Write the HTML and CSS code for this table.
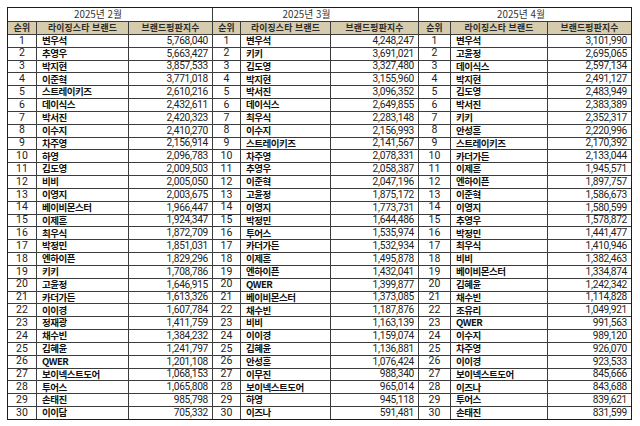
FILE: index.html
```html
<!DOCTYPE html>
<html lang="ko">
<head>
<meta charset="utf-8">
<title>라이징스타 브랜드평판지수</title>
<link rel="stylesheet" href="styles.css">
</head>
<body>
<div class="board">
  <div class="month m2">
    <div class="cell title t2">2025년 2월</div>
    <div class="cell head">순위</div><div class="cell head">라이징스타 브랜드</div><div class="cell head">브랜드평판지수</div>
    <div class="cell rank">1</div><div class="cell name">변우석</div><div class="cell score">5,768,040</div>
    <div class="cell rank">2</div><div class="cell name">추영우</div><div class="cell score">5,663,427</div>
    <div class="cell rank">3</div><div class="cell name">박지현</div><div class="cell score">3,857,533</div>
    <div class="cell rank">4</div><div class="cell name">이준혁</div><div class="cell score">3,771,018</div>
    <div class="cell rank">5</div><div class="cell name">스트레이키즈</div><div class="cell score">2,610,216</div>
    <div class="cell rank">6</div><div class="cell name">데이식스</div><div class="cell score">2,432,611</div>
    <div class="cell rank">7</div><div class="cell name">박서진</div><div class="cell score">2,420,323</div>
    <div class="cell rank">8</div><div class="cell name">이수지</div><div class="cell score">2,410,270</div>
    <div class="cell rank">9</div><div class="cell name">차주영</div><div class="cell score">2,156,914</div>
    <div class="cell rank">10</div><div class="cell name">하영</div><div class="cell score">2,096,783</div>
    <div class="cell rank">11</div><div class="cell name">김도영</div><div class="cell score">2,009,503</div>
    <div class="cell rank">12</div><div class="cell name">비비</div><div class="cell score">2,005,050</div>
    <div class="cell rank">13</div><div class="cell name">이영지</div><div class="cell score">2,003,675</div>
    <div class="cell rank">14</div><div class="cell name">베이비몬스터</div><div class="cell score">1,966,447</div>
    <div class="cell rank">15</div><div class="cell name">이제훈</div><div class="cell score">1,924,347</div>
    <div class="cell rank">16</div><div class="cell name">최우식</div><div class="cell score">1,872,709</div>
    <div class="cell rank">17</div><div class="cell name">박정민</div><div class="cell score">1,851,031</div>
    <div class="cell rank">18</div><div class="cell name">엔하이픈</div><div class="cell score">1,829,296</div>
    <div class="cell rank">19</div><div class="cell name">키키</div><div class="cell score">1,708,786</div>
    <div class="cell rank">20</div><div class="cell name">고윤정</div><div class="cell score">1,646,915</div>
    <div class="cell rank">21</div><div class="cell name">카더가든</div><div class="cell score">1,613,326</div>
    <div class="cell rank">22</div><div class="cell name">이이경</div><div class="cell score">1,607,784</div>
    <div class="cell rank">23</div><div class="cell name">정재광</div><div class="cell score">1,411,759</div>
    <div class="cell rank">24</div><div class="cell name">채수빈</div><div class="cell score">1,384,232</div>
    <div class="cell rank">25</div><div class="cell name">김혜윤</div><div class="cell score">1,241,797</div>
    <div class="cell rank">26</div><div class="cell name">QWER</div><div class="cell score">1,201,108</div>
    <div class="cell rank">27</div><div class="cell name">보이넥스트도어</div><div class="cell score">1,068,153</div>
    <div class="cell rank">28</div><div class="cell name">투어스</div><div class="cell score">1,065,808</div>
    <div class="cell rank">29</div><div class="cell name">손태진</div><div class="cell score">985,798</div>
    <div class="cell rank">30</div><div class="cell name">이이담</div><div class="cell score">705,332</div>
  </div>
  <div class="month m3">
    <div class="cell title t3">2025년 3월</div>
    <div class="cell head">순위</div><div class="cell head">라이징스타 브랜드</div><div class="cell head">브랜드평판지수</div>
    <div class="cell rank">1</div><div class="cell name">변우석</div><div class="cell score">4,248,247</div>
    <div class="cell rank">2</div><div class="cell name">키키</div><div class="cell score">3,691,021</div>
    <div class="cell rank">3</div><div class="cell name">김도영</div><div class="cell score">3,327,480</div>
    <div class="cell rank">4</div><div class="cell name">박지현</div><div class="cell score">3,155,960</div>
    <div class="cell rank">5</div><div class="cell name">박서진</div><div class="cell score">3,096,352</div>
    <div class="cell rank">6</div><div class="cell name">데이식스</div><div class="cell score">2,649,855</div>
    <div class="cell rank">7</div><div class="cell name">최우식</div><div class="cell score">2,283,148</div>
    <div class="cell rank">8</div><div class="cell name">이수지</div><div class="cell score">2,156,993</div>
    <div class="cell rank">9</div><div class="cell name">스트레이키즈</div><div class="cell score">2,141,567</div>
    <div class="cell rank">10</div><div class="cell name">차주영</div><div class="cell score">2,078,331</div>
    <div class="cell rank">11</div><div class="cell name">추영우</div><div class="cell score">2,058,387</div>
    <div class="cell rank">12</div><div class="cell name">이준혁</div><div class="cell score">2,047,196</div>
    <div class="cell rank">13</div><div class="cell name">고윤정</div><div class="cell score">1,875,172</div>
    <div class="cell rank">14</div><div class="cell name">이영지</div><div class="cell score">1,773,731</div>
    <div class="cell rank">15</div><div class="cell name">박정민</div><div class="cell score">1,644,486</div>
    <div class="cell rank">16</div><div class="cell name">투어스</div><div class="cell score">1,535,974</div>
    <div class="cell rank">17</div><div class="cell name">카더가든</div><div class="cell score">1,532,934</div>
    <div class="cell rank">18</div><div class="cell name">이제훈</div><div class="cell score">1,495,878</div>
    <div class="cell rank">19</div><div class="cell name">엔하이픈</div><div class="cell score">1,432,041</div>
    <div class="cell rank">20</div><div class="cell name">QWER</div><div class="cell score">1,399,877</div>
    <div class="cell rank">21</div><div class="cell name">베이비몬스터</div><div class="cell score">1,373,085</div>
    <div class="cell rank">22</div><div class="cell name">채수빈</div><div class="cell score">1,187,876</div>
    <div class="cell rank">23</div><div class="cell name">비비</div><div class="cell score">1,163,139</div>
    <div class="cell rank">24</div><div class="cell name">이이경</div><div class="cell score">1,159,074</div>
    <div class="cell rank">25</div><div class="cell name">김혜윤</div><div class="cell score">1,136,881</div>
    <div class="cell rank">26</div><div class="cell name">안성훈</div><div class="cell score">1,076,424</div>
    <div class="cell rank">27</div><div class="cell name">이무진</div><div class="cell score">988,340</div>
    <div class="cell rank">28</div><div class="cell name">보이넥스트도어</div><div class="cell score">965,014</div>
    <div class="cell rank">29</div><div class="cell name">하영</div><div class="cell score">945,118</div>
    <div class="cell rank">30</div><div class="cell name">이즈나</div><div class="cell score">591,481</div>
  </div>
  <div class="month m4">
    <div class="cell title t4">2025년 4월</div>
    <div class="cell head">순위</div><div class="cell head">라이징스타 브랜드</div><div class="cell head">브랜드평판지수</div>
    <div class="cell rank">1</div><div class="cell name">변우석</div><div class="cell score">3,101,990</div>
    <div class="cell rank">2</div><div class="cell name">고윤정</div><div class="cell score">2,695,065</div>
    <div class="cell rank">3</div><div class="cell name">데이식스</div><div class="cell score">2,597,134</div>
    <div class="cell rank">4</div><div class="cell name">박지현</div><div class="cell score">2,491,127</div>
    <div class="cell rank">5</div><div class="cell name">김도영</div><div class="cell score">2,483,949</div>
    <div class="cell rank">6</div><div class="cell name">박서진</div><div class="cell score">2,383,389</div>
    <div class="cell rank">7</div><div class="cell name">키키</div><div class="cell score">2,352,317</div>
    <div class="cell rank">8</div><div class="cell name">안성훈</div><div class="cell score">2,220,996</div>
    <div class="cell rank">9</div><div class="cell name">스트레이키즈</div><div class="cell score">2,170,392</div>
    <div class="cell rank">10</div><div class="cell name">카더가든</div><div class="cell score">2,133,044</div>
    <div class="cell rank">11</div><div class="cell name">이제훈</div><div class="cell score">1,945,571</div>
    <div class="cell rank">12</div><div class="cell name">엔하이픈</div><div class="cell score">1,897,757</div>
    <div class="cell rank">13</div><div class="cell name">이준혁</div><div class="cell score">1,586,673</div>
    <div class="cell rank">14</div><div class="cell name">이영지</div><div class="cell score">1,580,599</div>
    <div class="cell rank">15</div><div class="cell name">추영우</div><div class="cell score">1,578,872</div>
    <div class="cell rank">16</div><div class="cell name">박정민</div><div class="cell score">1,441,477</div>
    <div class="cell rank">17</div><div class="cell name">최우식</div><div class="cell score">1,410,946</div>
    <div class="cell rank">18</div><div class="cell name">비비</div><div class="cell score">1,382,463</div>
    <div class="cell rank">19</div><div class="cell name">베이비몬스터</div><div class="cell score">1,334,874</div>
    <div class="cell rank">20</div><div class="cell name">김혜윤</div><div class="cell score">1,242,342</div>
    <div class="cell rank">21</div><div class="cell name">채수빈</div><div class="cell score">1,114,828</div>
    <div class="cell rank">22</div><div class="cell name">조유리</div><div class="cell score">1,049,921</div>
    <div class="cell rank">23</div><div class="cell name">QWER</div><div class="cell score">991,563</div>
    <div class="cell rank">24</div><div class="cell name">이수지</div><div class="cell score">989,120</div>
    <div class="cell rank">25</div><div class="cell name">차주영</div><div class="cell score">926,070</div>
    <div class="cell rank">26</div><div class="cell name">이이경</div><div class="cell score">923,533</div>
    <div class="cell rank">27</div><div class="cell name">보이넥스트도어</div><div class="cell score">845,666</div>
    <div class="cell rank">28</div><div class="cell name">이즈나</div><div class="cell score">843,688</div>
    <div class="cell rank">29</div><div class="cell name">투어스</div><div class="cell score">839,621</div>
    <div class="cell rank">30</div><div class="cell name">손태진</div><div class="cell score">831,599</div>
  </div>
</div>
</body>
</html>
```

FILE: styles.css
```css
html, body {
  margin: 0;
  padding: 0;
  background: #ffffff;
}

body {
  font-family: "Noto Sans CJK KR", "Noto Sans", sans-serif;
  color: #111111;
}

.board {
  display: flex;
  gap: 1px;
  width: max-content;
  height: 411px;
  margin: 7px 0 0 7px;
  background: #3c3c3c;
  border: 1px solid #1c1c1c;
}

.month {
  display: grid;
  grid-template-rows: 13px 12px repeat(30, minmax(0, 1fr));
  gap: 1px;
}

.m2 { grid-template-columns: 28px 91px 83px; }
.m3 { grid-template-columns: 27px 89px 87px; }
.m4 { grid-template-columns: 31px 96px 83px; }

.cell {
  display: flex;
  align-items: center;
  min-width: 0;
  min-height: 0;
  background: #ffffff;
  white-space: nowrap;
  line-height: 1;
}

.title {
  grid-column: 1 / -1;
  justify-content: center;
  font-size: 9.8px;
  color: #333333;
}

.t2 { padding-right: 24px; }
.t3 { padding-right: 18px; }
.t4 { padding-right: 8px; }

.head {
  justify-content: center;
  background: #d6ccad;
  font-size: 8.8px;
  font-weight: 700;
  color: #2a2a2a;
  letter-spacing: 0.2px;
}

.rank {
  justify-content: center;
  font-family: Roboto, "Noto Sans", sans-serif;
  font-size: 10.5px;
  color: #222222;
}

.name {
  padding-left: 5px;
  font-size: 9.5px;
  font-weight: 700;
  color: #111111;
  letter-spacing: -0.5px;
}

.score {
  justify-content: flex-end;
  padding-right: 4px;
  font-family: Roboto, "Noto Sans", sans-serif;
  font-size: 10.2px;
  letter-spacing: -0.3px;
  color: #222222;
}
```
